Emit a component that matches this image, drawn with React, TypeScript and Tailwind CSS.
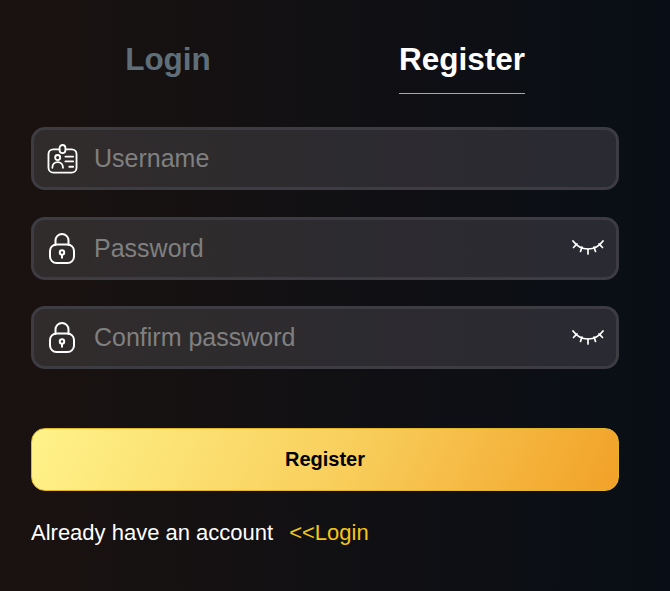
import React from 'react'

const font = "font-['Liberation_Sans',Arial,sans-serif]"

const IdIcon = () => (
    <svg width="31" height="30" viewBox="0 0 32 31" fill="none" stroke="#fff" strokeWidth="1.9" strokeLinecap="round" strokeLinejoin="round" className="shrink-0">
        <path d="M12.5 5.500H6.500a5 5 0 0 0-5 5v14a5 5 0 0 0 5 5h19a5 5 0 0 0 5-5v-14a5 5 0 0 0-5-5h-6" />
        <rect x="13" y="1" width="6" height="8.500" rx="3" />
        <circle cx="11" cy="14" r="2.600" />
        <path d="M5.500 24.500c0-3.600 2.400-5.800 5.500-5.800s5.500 2.200 5.500 5.800" />
        <path d="M19 13h8M19 18h8M23 23.500h4" />
    </svg>
)

const LockIcon = () => (
    <svg width="28" height="33" viewBox="0 0 28 32" fill="none" stroke="#fff" strokeWidth="2" strokeLinecap="round" strokeLinejoin="round" className="shrink-0">
        <path d="M7.500 12.500V8a6.500 6.500 0 0 1 13 0v4.500" />
        <rect x="2" y="12" width="24" height="18.500" rx="6.500" />
        <circle cx="14" cy="20" r="2.200" />
        <path d="M14 22.200v3" />
    </svg>
)

const EyeIcon = () => (
    <svg width="32" height="18" viewBox="0 0 32 18" fill="none" stroke="#fff" strokeWidth="1.700" strokeLinecap="round" className="shrink-0">
        <path d="M1 2c4 5.500 9 8 15 8s11-2.500 15-8" />
        <path d="M1.500 8.500 5 4.800M30.500 8.500 27 4.800M8.500 12.500 10 8M23.500 12.500 22 8M16 15v-5" />
    </svg>
)

const Field = ({ icon, placeholder, eye }: { icon: React.ReactNode; placeholder: string; eye?: boolean }) => (
    <div className="flex items-center h-[63px] rounded-[14px] border-[3px] border-[#3c3c42] bg-gradient-to-r from-[#302c2b] to-[#2a2a33] pl-[11px] pr-[12px]">
        <div className="flex justify-center w-[34px] shrink-0">{icon}</div>
        <input
            placeholder={placeholder}
            className="flex-1 min-w-0 ml-[15px] pt-[1px] bg-transparent outline-none text-[25px] text-white placeholder:text-[#808080]"
        />
        {eye && <EyeIcon />}
    </div>
)

const App = () => {
    return (
        <div className={`${font} w-full h-[591px] overflow-hidden bg-gradient-to-r from-[#1a1210] via-[#111013] to-[#090e16]`}>

            {/* tabs */}
            <div className="grid grid-cols-2 w-[588px] ml-[21px] pt-[39px]">
                <div className="flex justify-center">
                    <span className="text-[31.5px] leading-[40px] font-bold text-[#5f6f7a]">Login</span>
                </div>
                <div className="flex flex-col items-center">
                    <span className="text-[31.5px] leading-[40px] font-bold text-white">Register</span>
                    <div className="w-[126px] h-px mt-[14px] bg-[#e6a800]" />
                </div>
            </div>

            {/* form */}
            <div className="flex flex-col mx-[31px] w-[588px] mt-[33px]">
                <div className="flex flex-col gap-[26.5px]">
                    <Field icon={<IdIcon />} placeholder="Username" />
                    <Field icon={<LockIcon />} placeholder="Password" eye />
                    <Field icon={<LockIcon />} placeholder="Confirm password" eye />
                </div>

                <button className="mt-[59px] h-[63px] pb-[1px] rounded-[14px] border border-[#e3b52c] bg-[linear-gradient(115deg,#fff38a_0%,#f8cd5a_55%,#f2a127_100%)] text-[20px] font-bold text-black">
                    Register
                </button>

                <div className="flex mt-[29px] text-[22px] leading-[26px]">
                    <span className="text-white">Already have an account</span>
                    <span className="text-[#f5c518] ml-[16px]">&lt;&lt;Login</span>
                </div>
            </div>
        </div>
    )
}

export default App
